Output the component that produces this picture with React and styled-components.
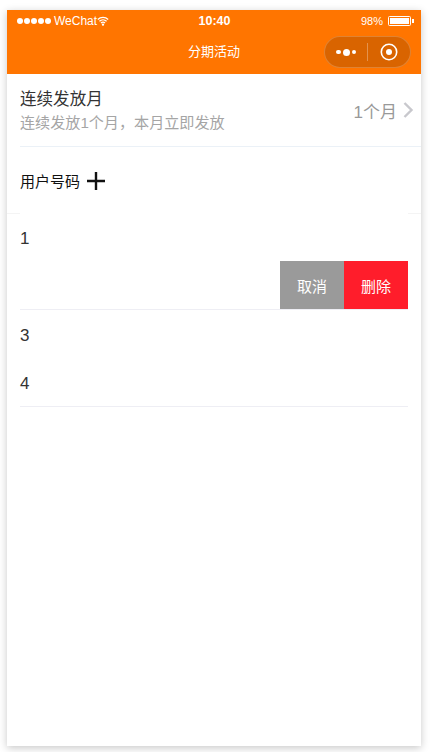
import React from "react";
import styled, { createGlobalStyle } from "styled-components";

const Global = createGlobalStyle`
  html, body { margin: 0; padding: 0; background: #fff; }
  body { font-family: "Liberation Sans", "Noto Sans CJK SC", sans-serif; }
`;
const Stage = styled.div`
  width: 432px; height: 752px; box-sizing: border-box; padding: 10px 11px 6px 7px; overflow: hidden;
`;
const Phone = styled.div`
  width: 414px; height: 736px; background: #fff; display: flex; flex-direction: column;
  box-shadow: 0 2px 8px rgba(0,0,0,.22);
`;
const Header = styled.header`
  height: 64px; background: #ff7500; color: #fff; display: flex; flex-direction: column; flex: none;
`;
const StatusBar = styled.div`
  height: 22px; display: grid; grid-template-columns: 1fr auto 1fr; align-items: center; padding: 0 9px 0 10px; font-size: 12px; line-height: 20px;
`;
const StatusLeft = styled.div`display: flex; align-items: center;`;
const Signal = styled.div`display: flex; gap: 1px; margin-right: 3px;`;
const Dot = styled.span`width: 6px; height: 6px; border-radius: 50%; background: #fff;`;
const Clock = styled.div`font-weight: 700; font-size: 12.5px;`;
const StatusRight = styled.div`display: flex; justify-content: flex-end; align-items: center; gap: 5px; font-size: 11px;`;
const Battery = styled.div`
  width: 19px; height: 6px; border: 1px solid #fff; border-radius: 1.5px; padding: 1px; margin-right: 1px; position: relative;
  &::before { content: ""; display: block; width: 100%; height: 100%; background: #fff; }
  &::after { content: ""; position: absolute; right: -4px; top: 2px; width: 2px; height: 4px; background: #fff; }
`;
const NavBar = styled.div`
  flex: 1; position: relative; display: flex; align-items: center; justify-content: center; font-size: 13px; padding-bottom: 5px;
`;
const Capsule = styled.div`
  position: absolute; right: 10px; top: 4px; width: 87px; height: 32px; box-sizing: border-box; border-radius: 16px;
  background: #d96400; border: 1px solid rgba(255,255,255,.2); display: flex; align-items: center;
`;
const CapsuleHalf = styled.div`flex: 1; display: flex; align-items: center; justify-content: center; gap: 2px;`;
const MoreDot = styled.span`
  width: ${p => p.$big ? 7 : 4.5}px; height: ${p => p.$big ? 7 : 4.5}px; border-radius: 50%; background: #fff;
`;
const Divider = styled.span`width: 1px; height: 18px; background: rgba(255,255,255,.3);`;
const Setting = styled.div`
  margin-left: 13px; display: flex; align-items: center; height: 73px; box-sizing: border-box;
  padding-right: 7px; border-bottom: 1px solid #ebf1f7; flex: none;
`;
const SettingText = styled.div`flex: 1; display: flex; flex-direction: column; min-width: 0;`;
const SettingTitle = styled.div`font-size: 16.56px; line-height: 24px; color: #333;`;
const SettingDesc = styled.div`font-size: 15.1px; line-height: 21px; color: #a5a5a5;`;
const SettingValue = styled.div`display: flex; align-items: center; gap: 6px; color: #999; font-size: 17px;`;
const UserHeader = styled.div`
  height: 67px; box-sizing: border-box; display: flex; align-items: center; gap: 7px; padding: 0 13px;
  font-size: 15px; color: #111; flex: none; border-bottom: 1px solid #f4f4f4;
`;
const PlusIcon = styled.svg`margin-top: 2px; flex: none;`;
const List = styled.div`padding: 0 13px; margin-top: -1px; display: flex; flex-direction: column;`;
const Item = styled.div`
  height: 48px; box-sizing: border-box; display: flex; align-items: center; font-size: 17px; color: #333; background: #fff;
  padding-top: ${p => p.$actions ? 0 : 4}px;
  justify-content: ${p => p.$actions ? "flex-end" : "flex-start"};
  ${p => p.$border && "border-bottom: 1px solid #eeeef4; height: 49px;"}
`;
const Action = styled.button`
  width: 64px; height: 48px; border: 0; padding: 0; color: #fff; font: inherit; font-size: 15px;
  background: ${p => p.$danger ? "#ff1d2b" : "#9a9a9a"};
`;

export default function App() {
  return (
    <Stage>
      <Global />
      <Phone>
        <Header>
          <StatusBar>
            <StatusLeft>
              <Signal>{[0,1,2,3,4].map(i => <Dot key={i} />)}</Signal>
              WeChat
              <svg width="12" height="10" viewBox="0 0 12 10" fill="none" stroke="#fff" strokeWidth="1.2">
                <path d="M.8 3.5a7.5 7.5 0 0 1 10.4 0M2.4 5.3a5.2 5.2 0 0 1 7.2 0M4 7a2.8 2.8 0 0 1 4 0" />
                <circle cx="6" cy="8.6" r=".6" fill="#fff" />
              </svg>
            </StatusLeft>
            <Clock>10:40</Clock>
            <StatusRight>98%<Battery /></StatusRight>
          </StatusBar>
          <NavBar>
            分期活动
            <Capsule>
              <CapsuleHalf><MoreDot /><MoreDot $big /><MoreDot /></CapsuleHalf>
              <Divider />
              <CapsuleHalf>
                <svg width="18" height="18" viewBox="0 0 18 18" fill="none">
                  <circle cx="9" cy="9" r="7.7" stroke="#fff" strokeWidth="1.6" />
                  <circle cx="9" cy="9" r="3" fill="#fff" />
                </svg>
              </CapsuleHalf>
            </Capsule>
          </NavBar>
        </Header>
        <Setting>
          <SettingText>
            <SettingTitle>连续发放月</SettingTitle>
            <SettingDesc>连续发放1个月，本月立即发放</SettingDesc>
          </SettingText>
          <SettingValue>
            1个月
            <svg width="11" height="16" viewBox="0 0 11 16" fill="none" stroke="#c8c8cd" strokeWidth="2.4">
              <path d="M1.5 1l7 7-7 7" />
            </svg>
          </SettingValue>
        </Setting>
        <UserHeader>
          用户号码
          <PlusIcon width="18" height="18" viewBox="0 0 18 18" stroke="#111" strokeWidth="2.4">
            <path d="M0 9h18M9 0v18" />
          </PlusIcon>
        </UserHeader>
        <List>
          <Item>1</Item>
          <Item $border $actions>
            <Action>取消</Action>
            <Action $danger>删除</Action>
          </Item>
          <Item>3</Item>
          <Item $border>4</Item>
        </List>
      </Phone>
    </Stage>
  );
}
